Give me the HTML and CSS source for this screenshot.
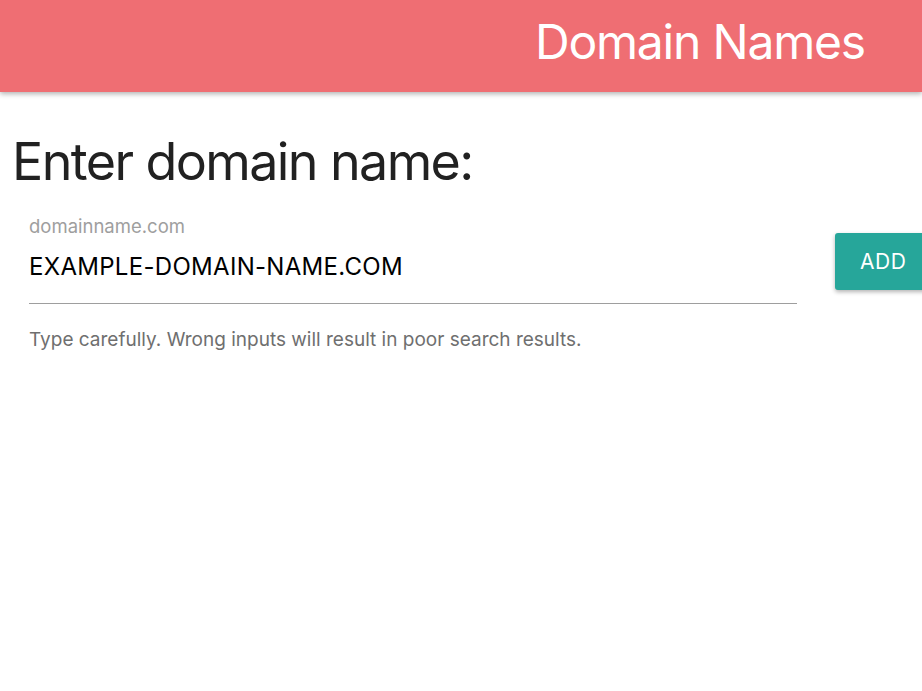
FILE: index.html
```html
<!DOCTYPE html>
<html>
<head>
<meta charset="utf-8">
<link rel="stylesheet" href="styles.css">
</head>
<body>
<header class="topbar">
  <h1 class="brand">Domain Names</h1>
</header>
<main class="content">
  <h2 class="heading">Enter domain name:</h2>
  <div class="form-row">
    <div class="field">
      <label class="field-label">domainname.com</label>
      <div class="field-value">EXAMPLE-DOMAIN-NAME.COM</div>
      <div class="field-line"></div>
      <div class="field-help">Type carefully. Wrong inputs will result in poor search results.</div>
    </div>
    <button class="add-btn">ADD</button>
  </div>
</main>
</body>
</html>
```
FILE: styles.css
```css
html, body {
  margin: 0;
  padding: 0;
  background: #fff;
  overflow: hidden;
}
body {
  width: 922px;
  height: 691px;
  font-family: "Inter", "Roboto", sans-serif;
}
.topbar {
  height: 92px;
  box-sizing: border-box;
  background: #ef6e73;
  box-shadow: 0 2px 5px rgba(0,0,0,0.3);
  display: flex;
  justify-content: flex-end;
  align-items: center;
  padding-right: 57px;
  padding-bottom: 8px;
  position: relative;
}
.brand {
  margin: 0;
  color: #fff;
  font-weight: 400;
  font-size: 48px;
  line-height: 56px;
  letter-spacing: -1.2px;
}
.content {
  padding: 0 0 0 12px;
}
.heading {
  margin: 38px 0 0 0;
  font-weight: 400;
  font-size: 52px;
  color: #212121;
  line-height: 64px;
  letter-spacing: -1.6px;
}
.form-row {
  display: flex;
  align-items: flex-start;
  padding-left: 17px;
}
.field {
  width: 768px;
  flex-shrink: 0;
  display: flex;
  flex-direction: column;
}
.field-label {
  font-size: 18.5px;
  color: #9e9e9e;
  line-height: 22px;
  margin-top: 21px;
}
.field-value {
  font-size: 24px;
  color: #000;
  line-height: 30px;
  letter-spacing: 0.3px;
  margin-top: 15px;
}
.field-line {
  height: 1px;
  background: #9e9e9e;
  margin-top: 21px;
}
.field-help {
  margin-top: 24px;
  font-size: 19px;
  color: #6f6f6f;
  line-height: 24px;
}
.add-btn {
  margin-left: 38px;
  margin-top: 39px;
  width: 100px;
  height: 57px;
  flex-shrink: 0;
  background: #26a69a;
  color: #fff;
  border: none;
  border-radius: 3px;
  font-family: inherit;
  font-size: 21px;
  letter-spacing: 0.6px;
  text-align: left;
  padding-left: 25px;
  box-shadow: 0 2px 4px rgba(0,0,0,0.3);
}
```
